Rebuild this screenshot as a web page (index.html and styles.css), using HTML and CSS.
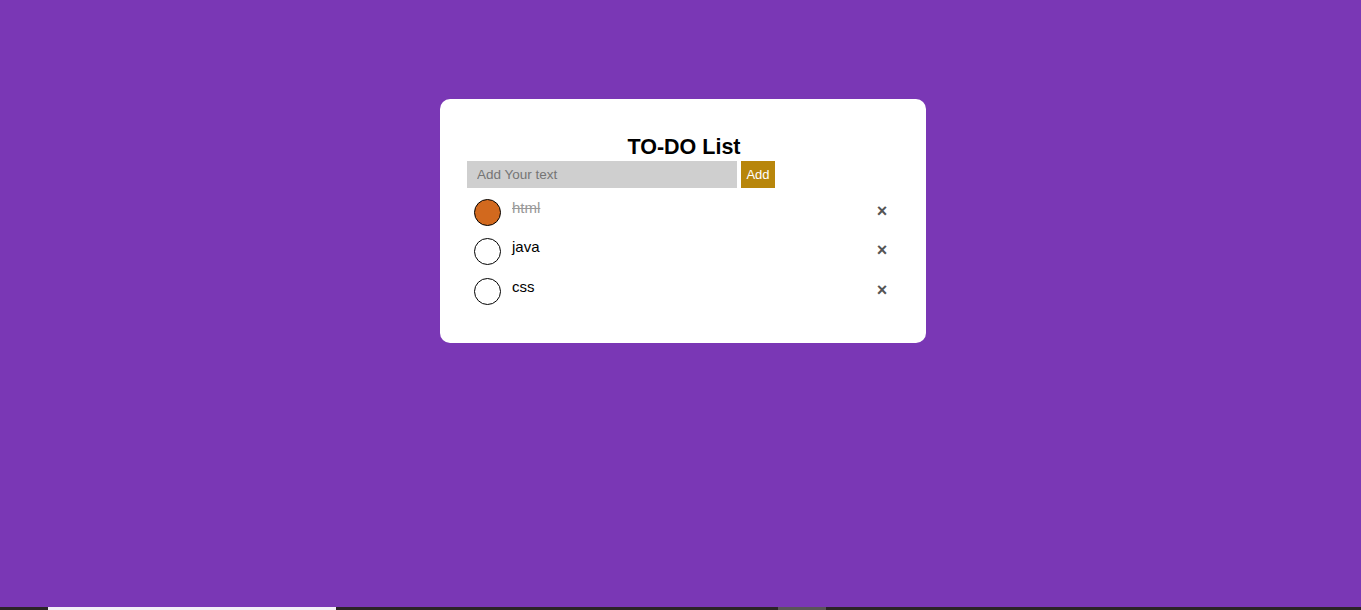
FILE: index.html
```html
<!DOCTYPE html>
<html lang="en">
<head>
<meta charset="utf-8">
<title>TO-DO List</title>
<link rel="stylesheet" href="styles.css">
</head>
<body>
<div class="todo-app">
  <h2 class="title">TO-DO List</h2>
  <div class="row-input">
    <input class="text-input" type="text" placeholder="Add Your text">
    <button class="add-btn">Add</button>
  </div>
  <ul class="list">
    <li class="item checked">
      <span class="check"></span>
      <span class="label">html</span>
      <span class="remove">&times;</span>
    </li>
    <li class="item">
      <span class="check"></span>
      <span class="label">java</span>
      <span class="remove">&times;</span>
    </li>
    <li class="item">
      <span class="check"></span>
      <span class="label">css</span>
      <span class="remove">&times;</span>
    </li>
  </ul>
</div>
<div class="taskbar">
  <span class="seg-white"></span>
  <span class="seg-grey"></span>
</div>
</body>
</html>
```
FILE: styles.css
```css
html, body {
  margin: 0;
  padding: 0;
}
body {
  background: #7a37b5;
  font-family: "Liberation Sans", Arial, sans-serif;
  height: 610px;
  overflow: hidden;
}
.todo-app {
  box-sizing: border-box;
  width: 486px;
  margin: 99px 0 0 calc(50% - 240.5px);
  background: #fff;
  border-radius: 10px;
  padding: 36px 34px 31px 27px;
}
.title {
  margin: 0;
  font-size: 21.5px;
  font-weight: bold;
  line-height: 25px;
  text-align: center;
  color: #000;
  padding-left: 9px;
}
.row-input {
  display: flex;
  gap: 4px;
  margin-top: 1px;
}
.text-input {
  box-sizing: border-box;
  width: 270px;
  height: 27px;
  border: none;
  outline: none;
  background: #cfcfcf;
  padding: 0 10px;
  font-family: "Liberation Sans", Arial, sans-serif;
  font-size: 13.5px;
  color: #333;
}
.text-input::placeholder {
  color: #757575;
}
.add-btn {
  box-sizing: border-box;
  height: 27px;
  width: 34px;
  border: none;
  background: #b8860b;
  color: #fff;
  font-family: "Liberation Sans", Arial, sans-serif;
  font-size: 13px;
  padding: 0;
}
.list {
  list-style: none;
  margin: 5px 0 0;
  padding: 0;
}
.item {
  display: flex;
  align-items: flex-start;
  height: 40px;
  padding: 6px 0 0 7px;
  box-sizing: border-box;
}
.item:first-child {
  height: 39px;
}
.check {
  box-sizing: border-box;
  width: 27px;
  height: 27px;
  border: 1px solid #000;
  border-radius: 50%;
  background: #fff;
  flex: none;
}
.checked .check {
  background: #d2691e;
}
.label {
  margin-left: 11px;
  font-size: 15px;
  line-height: 17px;
  color: #000;
  flex: 1;
}
.checked .label {
  color: #999;
  text-decoration: line-through;
}
.remove {
  width: 20px;
  height: 25px;
  line-height: 25px;
  text-align: center;
  font-size: 18px;
  font-weight: bold;
  color: #555;
  flex: none;
}
.taskbar {
  position: fixed;
  left: 0;
  right: 0;
  bottom: 0;
  height: 3px;
  background: #2b2427;
}
.seg-white {
  position: absolute;
  left: 48px;
  width: 288px;
  top: 0;
  bottom: 0;
  background: #f3eef7;
}
.seg-grey {
  position: absolute;
  left: 778px;
  width: 48px;
  top: 0;
  bottom: 0;
  background: #5a5458;
}
```
